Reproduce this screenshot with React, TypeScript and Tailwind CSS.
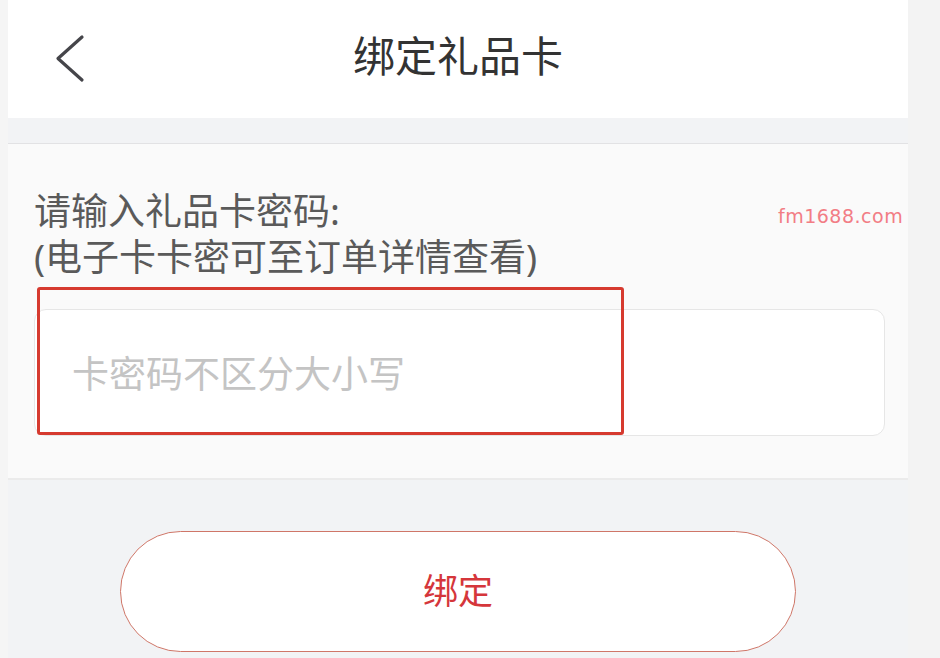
export default function App() {
  return (
    <div className="w-[940px] h-[658px] flex overflow-hidden bg-[#f5f5f5] font-['Noto_Sans','Noto_Sans_CJK_SC',sans-serif]">
      <div className="w-[8px] shrink-0 bg-[#f5f5f5]" />
      <div className="w-[900px] shrink-0 flex flex-col bg-[#f2f3f5] relative">
        <header className="h-[118px] bg-white relative flex items-center justify-center">
          <svg className="absolute left-[39px] top-[34px]" width="44" height="50" viewBox="0 0 44 50" fill="none">
            <path d="M35 3 L11 24.5 L35 46" stroke="#45454a" strokeWidth="3.2" strokeLinecap="round" strokeLinejoin="round" />
          </svg>
          <h1 className="text-[42px] leading-none text-[#333] mb-[6px]">绑定礼品卡</h1>
        </header>
        <div className="h-[26px] bg-[#f2f3f5] border-b border-[#e2e2e4]" />
        <section className="bg-[#fafafa] pt-[44px] pl-[26px] pr-[23px] pb-[42px] border-b-2 border-[#ebebeb] relative">
          <p className="text-[37px] leading-[46px] text-[#5a5a5a]">请输入礼品卡密码:</p>
          <p className="text-[37px] leading-[46px] text-[#5a5a5a]">(电子卡卡密可至订单详情查看)</p>
          <span className="absolute left-[770px] top-[58px] text-[19px] font-medium tracking-[0.5px] text-[#f27d85] font-['DejaVu_Sans',sans-serif]">fm1688.com</span>
          <div className="mt-[29px] h-[127px] bg-white border border-[#e6e6e6] rounded-[12px] flex items-center pl-[37px]">
            <span className="text-[37px] text-[#c4c4c4] mt-[2px]">卡密码不区分大小写</span>
          </div>
          <div className="absolute left-[29px] top-[143px] w-[587px] h-[148px] border-[3px] border-[#d63a2f] rounded-[3px] pointer-events-none" />
        </section>
        <div className="flex justify-center pt-[51px]">
          <button className="w-[676px] h-[121px] rounded-full bg-white border border-[#cf7668] text-[35px] text-[#d5363b]">
            绑定
          </button>
        </div>
      </div>
      <div className="flex-1 bg-[#f3f3f3]" />
    </div>
  )
}
